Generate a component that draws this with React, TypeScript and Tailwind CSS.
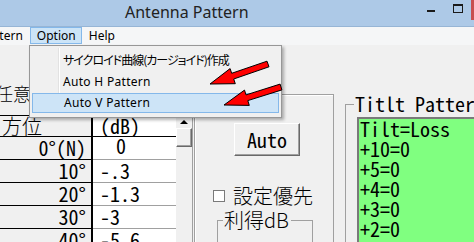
import React from "react";

function M({
  children,
  o = "origin-left",
}: {
  children: React.ReactNode;
  o?: string;
}) {
  return (
    <span
      className={`inline-block whitespace-pre font-['Noto_Sans_Mono_CJK_JP',monospace] text-[20px] leading-[20px] ${o}`}
    >
      {children}
    </span>
  );
}

function arrowPoints(tx: number, ty: number, ex: number, ey: number, head = 24, hw = 8, sw = 3) {
  const dx = ex - tx;
  const dy = ey - ty;
  const L = Math.hypot(dx, dy);
  const ux = dx / L;
  const uy = dy / L;
  const nx = -uy;
  const ny = ux;
  const hx = tx + ux * head;
  const hy = ty + uy * head;
  const pts = [
    [tx, ty],
    [hx + nx * hw, hy + ny * hw],
    [hx + nx * sw, hy + ny * sw],
    [ex + nx * sw, ey + ny * sw],
    [ex - nx * sw, ey - ny * sw],
    [hx - nx * sw, hy - ny * sw],
    [hx - nx * hw, hy - ny * hw],
  ];
  return pts.map((p) => `${p[0].toFixed(1)},${p[1].toFixed(1)}`).join(" ");
}

export default function App() {
  const rows: [string, string][] = [
    ["0°(N)", "0"],
    ["10°", "-.3"],
    ["20°", "-1.3"],
    ["30°", "-3"],
    ["40°", "-5.6"],
    ["50°", "-9"],
  ];
  const green = ["Tilt=Loss", "+10=0", "+5=0", "+4=0", "+3=0", "+2=0", "+1=0"];

  return (
    <div className="relative h-[242px] w-[474px] overflow-hidden bg-[#f0f0f0] font-['Noto_Sans',sans-serif] text-black">
      {/* Title bar */}
      <div className="flex h-[27px] items-start border-b border-[#97b5d5] bg-[#adc9e7]">
        <div className="ml-[125px] mt-[2px] whitespace-nowrap text-[16px] leading-[20px] text-[#222]">
          Antenna Pattern
        </div>
        <div className="ml-auto flex">
          <div className="mt-[10px] h-[2px] w-[8px] bg-[#1a1a1a]" />
          <div className="ml-[18px] mt-[4px] h-[9px] w-[10px] border border-t-2 border-[#1a1a1a]" />
          <div className="ml-[8px] h-[20px] w-[3px] bg-[#c75050]" />
        </div>
      </div>

      {/* Menu bar */}
      <div className="flex h-[18px] items-start bg-[#f5f6f7] text-[12px] leading-[18px]">
        <div className="-ml-[19px] whitespace-nowrap">Pattern</div>
        <div className="ml-[7px] h-[17px] w-[52px] border border-[#84b8ea] bg-[#cce4f7] px-[6px] leading-[15px]">
          Option
        </div>
        <div className="ml-[7px]">Help</div>
      </div>

      {/* Client area */}
      <div className="flex">
        {/* Left: grid */}
        <div className="flex w-[193px] flex-none flex-col">
          <div className="-ml-[5px] mt-[38px] h-[20px] font-['Noto_Sans_CJK_JP',sans-serif] text-[18px] font-light leading-[20px]">
            任意
          </div>
          <div className="mt-[12px] flex">
            <div className="w-[176px] border-t border-black">
              <div className="flex h-[21px] border-b border-black">
                <div className="w-[91px] bg-[#f0f0f0] pl-[2px] font-['Noto_Sans_CJK_JP',sans-serif] text-[20px] font-light leading-[20px]">
                  方位
                </div>
                <div className="w-[2px] bg-black" />
                <div className="flex-1 bg-white pl-[7px]">
                  <M>(dB)</M>
                </div>
              </div>
              {rows.map(([a, b]) => (
                <div key={a} className="flex h-[23px]">
                  <div className="flex w-[91px] items-center justify-end border-b border-black bg-[#f0f0f0] pr-[5px]">
                    <M o="origin-right">{a}</M>
                  </div>
                  <div className="w-[2px] bg-black" />
                  <div className="flex flex-1 items-center border-b border-[#a0a0a0] bg-white pl-[7px]">
                    {b === "0" ? (
                      <span className="pl-[16px]">
                        <M>{b}</M>
                      </span>
                    ) : (
                      <M>{b}</M>
                    )}
                  </div>
                </div>
              ))}
            </div>
            {/* Scrollbar */}
            <div className="flex w-[17px] flex-col border-r border-[#a0a0a0] bg-[#f0f0f0]">
              <div className="flex h-[13px] items-center justify-center">
                <div className="h-0 w-0 border-x-[4px] border-b-[4px] border-x-transparent border-b-black" />
              </div>
              <div className="h-[19px] border border-t-white border-l-white border-r-[#696969] border-b-[#696969] shadow-[inset_-1px_-1px_0_#a0a0a0]" />
            </div>
          </div>
        </div>

        {/* Middle panel */}
        <div className="w-[152px] flex-none">
          <div className="ml-[1px] mt-[49px] h-[160px] w-[140px] border-l border-r border-t border-[#a0a0a0] shadow-[inset_1px_1px_0_#fff]">
            <div className="ml-[39px] mt-[28px] flex h-[33px] w-[66px] items-center justify-center border border-t-white border-l-white border-r-[#696969] border-b-[#696969] bg-[#f0f0f0] shadow-[inset_-1px_-1px_0_#a0a0a0]">
              <M o="origin-center">Auto</M>
            </div>
            <div className="mt-[30px] flex h-[20px] items-center">
              <div className="ml-[18px] h-[12px] w-[12px] border border-[#7a7a7a] bg-white" />
              <div className="ml-[8px] whitespace-nowrap font-['Noto_Sans_CJK_JP',sans-serif] text-[20px] font-light leading-[20px]">
                設定優先
              </div>
            </div>
            <div className="ml-[22px] mt-[4px] w-[96px]">
              <div className="flex h-[20px]">
                <div className="mt-[10px] h-[10px] w-[6px] border-l border-t border-[#a0a0a0]" />
                <div className="ml-[1px] whitespace-nowrap font-['Noto_Sans_CJK_JP',sans-serif] text-[20px] font-light leading-[20px]">
                  利得dB
                </div>
                <div className="ml-[2px] mt-[10px] h-[10px] flex-1 border-r border-t border-[#a0a0a0]" />
              </div>
              <div className="h-[30px] border-l border-r border-[#a0a0a0]" />
            </div>
          </div>
        </div>

        {/* Right group */}
        <div className="flex-1">
          <div className="mt-[49px] flex h-[20px]">
            <div className="mt-[10px] h-[10px] w-[9px] flex-none border-l border-t border-[#a0a0a0]" />
            <div className="ml-[1px] flex-none">
              <M>Titlt Pattern</M>
            </div>
          </div>
          <div className="border-l border-[#a0a0a0] pt-[3px]">
            <div className="ml-[11px] h-[140px] overflow-hidden border-l-2 border-t-2 border-[#7a7a7a] bg-[#80ff80] pl-[1px]">
              {green.map((g) => (
                <div key={g} className="h-[20px]">
                  <M>{g}</M>
                </div>
              ))}
            </div>
          </div>
        </div>
      </div>

      {/* Dropdown menu overlay */}
      <div className="absolute left-[29px] top-[45px] flex h-[73px] w-[253px] flex-col border border-[#979797] bg-[#f0f0f0] p-[2px] text-[12px] shadow-[2px_2px_3px_rgba(0,0,0,0.3)]">
        <div className="flex h-[23px]">
          <div className="w-[27px] border-r border-[#e2e2e2]" />
          <div className="flex items-center border-l border-white pl-[3px] font-['Noto_Sans_CJK_JP',sans-serif] tracking-[-1px] [font-feature-settings:'palt']">
            サイクロイド曲線(カージョイド)作成
          </div>
        </div>
        <div className="flex h-[22px]">
          <div className="w-[27px] border-r border-[#e2e2e2]" />
          <div className="flex items-center border-l border-white pl-[3px] tracking-[0.3px]">Auto H Pattern</div>
        </div>
        <div className="flex h-[20px] items-center border border-[#84b8ea] bg-[#cde4f7] pl-[31px] tracking-[0.3px]">
          Auto V Pattern
        </div>
      </div>

      {/* Red arrows */}
      <svg className="pointer-events-none absolute left-0 top-0" width="474" height="242">
        <polygon points={arrowPoints(210, 84, 268, 64)} fill="#ff0000" stroke="#000" strokeWidth="1" strokeLinejoin="miter" />
        <polygon points={arrowPoints(224, 105, 281, 87)} fill="#ff0000" stroke="#000" strokeWidth="1" strokeLinejoin="miter" />
      </svg>
    </div>
  );
}
